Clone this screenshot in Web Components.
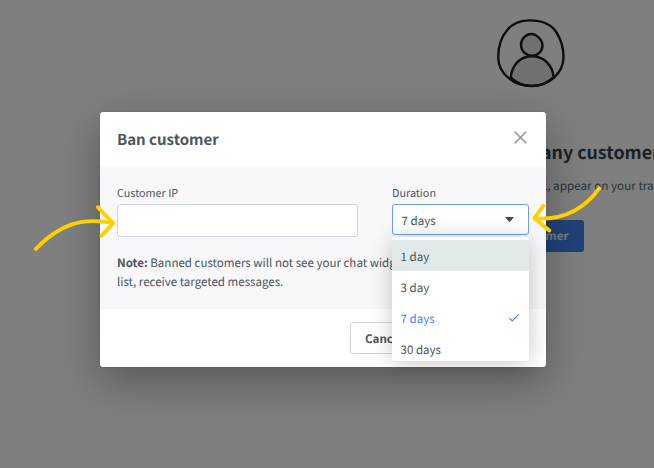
<!DOCTYPE html>
<html lang="en">

  <head>
    <meta charset="UTF-8">
    <meta name="viewport" content="width=device-width, initial-scale=1.0">
    <title>Ban customer</title>
    <style>
      :root {
        --text-color: #4a5560;
        --border-color: #cfd6de;
        --primary-color: #4384f5;
        --arrow-color: #ffd000;
      }

      body {
        margin: 0;
        width: 654px;
        height: 468px;
        overflow: hidden;
        position: relative;
        background: #fff;
        color: var(--text-color);
        font-family: "Noto Sans CJK SC", "Noto Sans", sans-serif;
        font-size: 11.55px;
        text-rendering: geometricPrecision;
      }
    </style>
  </head>

  <body>
    <empty-state>
      <span slot="title">any customers</span>
      <span slot="text">list, appear on your traffic</span>
      <span slot="action">customer</span>
    </empty-state>

    <modal-overlay>
      <modal-dialog>
        <span slot="title">Ban customer</span>
        <form-field class="ip">
          <span slot="label">Customer IP</span>
          <text-input></text-input>
        </form-field>
        <form-field class="duration">
          <span slot="label">Duration</span>
          <select-box value="7 days">
            <select-option active>1 day</select-option>
            <select-option>3 day</select-option>
            <select-option selected>7 days</select-option>
            <select-option>30 days</select-option>
          </select-box>
        </form-field>
        <span slot="note"><b>Note:</b> Banned customers will not see your chat widget<br>list, receive targeted messages.</span>
        <plain-button slot="footer">Cancel</plain-button>
      </modal-dialog>
    </modal-overlay>

    <hint-arrows></hint-arrows>

    <script>
      // small helper, every element here is just markup + styles
      function define(name, html) {
        customElements.define(name, class extends HTMLElement {
          constructor() {
            super();
            const shadowRoot = this.attachShadow({ mode: 'open' });
            shadowRoot.innerHTML = html;
          }
        });
      }

      // page behind the modal
      define('empty-state', `
        <style>
          :host {
            display: flex;
            flex-direction: column;
            align-items: flex-start;
            box-sizing: border-box;
            height: 468px;
            padding-top: 18px;
            padding-left: 496px;
            white-space: nowrap;
            overflow: hidden;
          }
          svg { display: block; }
          h2 {
            margin: 51px 0 0 45px;
            font-size: 17.8px;
            line-height: 26px;
            font-weight: 600;
            color: #37424c;
          }
          p {
            margin: 11px 0 0 35px;
            font-size: 11.7px;
            line-height: 20px;
            color: #5b6670;
          }
          .action {
            box-sizing: border-box;
            width: 95.5px;
            height: 32px;
            margin: 24px 0 0 -8px;
            padding-right: 15px;
            border-radius: 3px;
            background: #4384f5;
            color: #fff;
            font-weight: 600;
            line-height: 32px;
            text-align: right;
          }
        </style>
        <svg width="70" height="70" viewBox="496 18 70 70" fill="none" stroke="#1c1c1c" stroke-width="2.4" stroke-linejoin="round">
          <path fill="#e2e2e2" d="M531.5 34C536 34 542.5 39.500 542.500 45.500C542.500 51.500 537.500 55.800 532 55.800C526 55.800 521 51 521 45C521 38.500 526 34 531.500 34Z"/>
          <path fill="#e2e2e2" d="M510.700 77.300C512 65 520 56.300 532 56.300C544.500 56.300 553 66 553.500 77.300C541 89 522 88.500 510.700 77.300Z"/>
          <path d="M529.500 20.400C540 20.400 551 23.500 556.500 32.500C562 41 563.500 49 563.500 57C563.500 73 549 86 531.700 86C513.500 86 498.200 73.500 498.200 57C498.200 46 501 37 507.500 29.700C513 23.300 520 20.400 529.500 20.400Z"/>
        </svg>
        <h2><slot name="title"></slot></h2>
        <p><slot name="text"></slot></p>
        <div class="action"><slot name="action"></slot></div>
      `);

      define('modal-overlay', `
        <style>
          :host {
            position: absolute;
            inset: 0;
            box-sizing: border-box;
            padding: 112px 0 0 100px;
            background: rgba(0, 0, 0, .5);
          }
        </style>
        <slot></slot>
      `);

      define('modal-dialog', `
        <style>
          :host {
            display: flex;
            flex-direction: column;
            width: 446px;
            height: 255px;
            border-radius: 3px;
            background: #fff;
            box-shadow: 0 14px 44px rgba(0, 0, 0, .32), 0 0 1px rgba(0, 0, 0, .4);
          }
          header {
            display: flex;
            justify-content: space-between;
            box-sizing: border-box;
            height: 55px;
            padding: 15px 19px 0 17px;
          }
          h1 {
            margin: 0;
            font-size: 15px;
            line-height: 26px;
            font-weight: 600;
          }
          header svg { margin-top: 4px; }
          section {
            box-sizing: border-box;
            height: 142px;
            padding: 16px 17px 0;
            background: #f8f8fb;
          }
          .fields {
            display: flex;
            gap: 34px;
          }
          p {
            margin: 17px 0 0;
            line-height: 19px;
            white-space: nowrap;
          }
          footer {
            padding: 13px 17px 0 250px;
          }
        </style>
        <header>
          <h1><slot name="title"></slot></h1>
          <svg width="13" height="13" viewBox="0 0 13 13" fill="none" stroke="#9ba2aa" stroke-width="1.7" stroke-linecap="round">
            <path d="M1.200 1.200L11.800 11.800M11.800 1.200L1.200 11.800"/>
          </svg>
        </header>
        <section>
          <div class="fields"><slot></slot></div>
          <p><slot name="note"></slot></p>
        </section>
        <footer><slot name="footer"></slot></footer>
      `);

      define('form-field', `
        <style>
          :host { display: block; }
          :host(.ip) { width: 241px; }
          :host(.duration) { width: 137px; }
          label {
            display: block;
            height: 21px;
            font-size: 10.8px;
            line-height: 20px;
          }
        </style>
        <label><slot name="label"></slot></label>
        <slot></slot>
      `);

      define('text-input', `
        <style>
          :host {
            display: block;
            box-sizing: border-box;
            height: 33px;
            border: 1px solid var(--border-color);
            border-radius: 3px;
            background: #fff;
          }
        </style>
      `);

      customElements.define('select-box', class extends HTMLElement {
        constructor() {
          super();
          const shadowRoot = this.attachShadow({ mode: 'open' });
          shadowRoot.innerHTML = `
            <style>
              :host {
                display: block;
                position: relative;
                height: 33px;
              }
              .value {
                display: flex;
                align-items: center;
                justify-content: space-between;
                box-sizing: border-box;
                height: 31px;
                padding: 0 14px 0 8.500px;
                border: 1px solid #6a9df8;
                border-radius: 3px;
                background: #fff;
                line-height: 20px;
              }
              .value span { padding-top: 2px; }
              /* the list is cut off inside its last row */
              .menu {
                position: absolute;
                z-index: 1;
                top: 33px;
                left: 0;
                box-sizing: border-box;
                width: 137px;
                height: 124px;
                padding-top: 3px;
                border-radius: 3px;
                background: #fff;
                box-shadow: 0 2px 22px rgba(0, 0, 0, .22);
              }
              .clip {
                height: 121px;
                overflow: hidden;
              }
            </style>
            <div class="value">
              <span></span>
              <svg width="9" height="5" viewBox="0 0 9 5"><path fill="#424d57" d="M.8 0H8.200Q9 0 8.500 .8L5.200 4.500Q4.500 5.200 3.800 4.500L.5 .8Q0 0 .8 0Z"/></svg>
            </div>
            <div class="menu"><div class="clip"><slot></slot></div></div>
          `;
        }
        connectedCallback() {
          this.shadowRoot.querySelector('span').textContent = this.getAttribute('value');
        }
      });

      define('select-option', `
        <style>
          :host {
            display: flex;
            align-items: center;
            justify-content: space-between;
            box-sizing: border-box;
            height: 31px;
            padding: 0 10px 0 8.500px;
            line-height: 20px;
          }
          :host([active]) { background: #e0e8ea; }
          :host([selected]) { color: var(--primary-color); }
          span { padding-top: 2px; }
          svg { display: none; }
          :host([selected]) svg { display: block; }
        </style>
        <span><slot></slot></span>
        <svg width="10" height="8" viewBox="0 0 10 8" fill="none" stroke="currentColor" stroke-width="1.200" stroke-linecap="round" stroke-linejoin="round">
          <path d="M.7 4.300L3.200 6.900L9.300 .8"/>
        </svg>
      `);

      define('plain-button', `
        <style>
          :host {
            display: block;
            box-sizing: border-box;
            width: 68px;
            height: 32px;
            padding-left: 14px;
            border: 1px solid var(--border-color);
            border-radius: 3px;
            font-weight: 600;
            line-height: 32px;
          }
        </style>
        <slot></slot>
      `);

      define('hint-arrows', `
        <style>
          :host {
            position: absolute;
            inset: 0;
            z-index: 2;
            pointer-events: none;
          }
          svg { display: block; }
        </style>
        <svg width="654" height="468" fill="none" stroke="var(--arrow-color)" stroke-width="3.800" stroke-linecap="round" stroke-linejoin="round">
          <path d="M35.800 248.800C60 224 82 217 113 223"/>
          <path d="M97.800 207.300L113.200 223.200L101.500 235.800"/>
          <path d="M599.200 188.300C583 211 561 220 535 218.500"/>
          <path d="M543.300 205.800L534.500 218.200L549.300 230.500"/>
        </svg>
      `);
    </script>
  </body>

</html>
